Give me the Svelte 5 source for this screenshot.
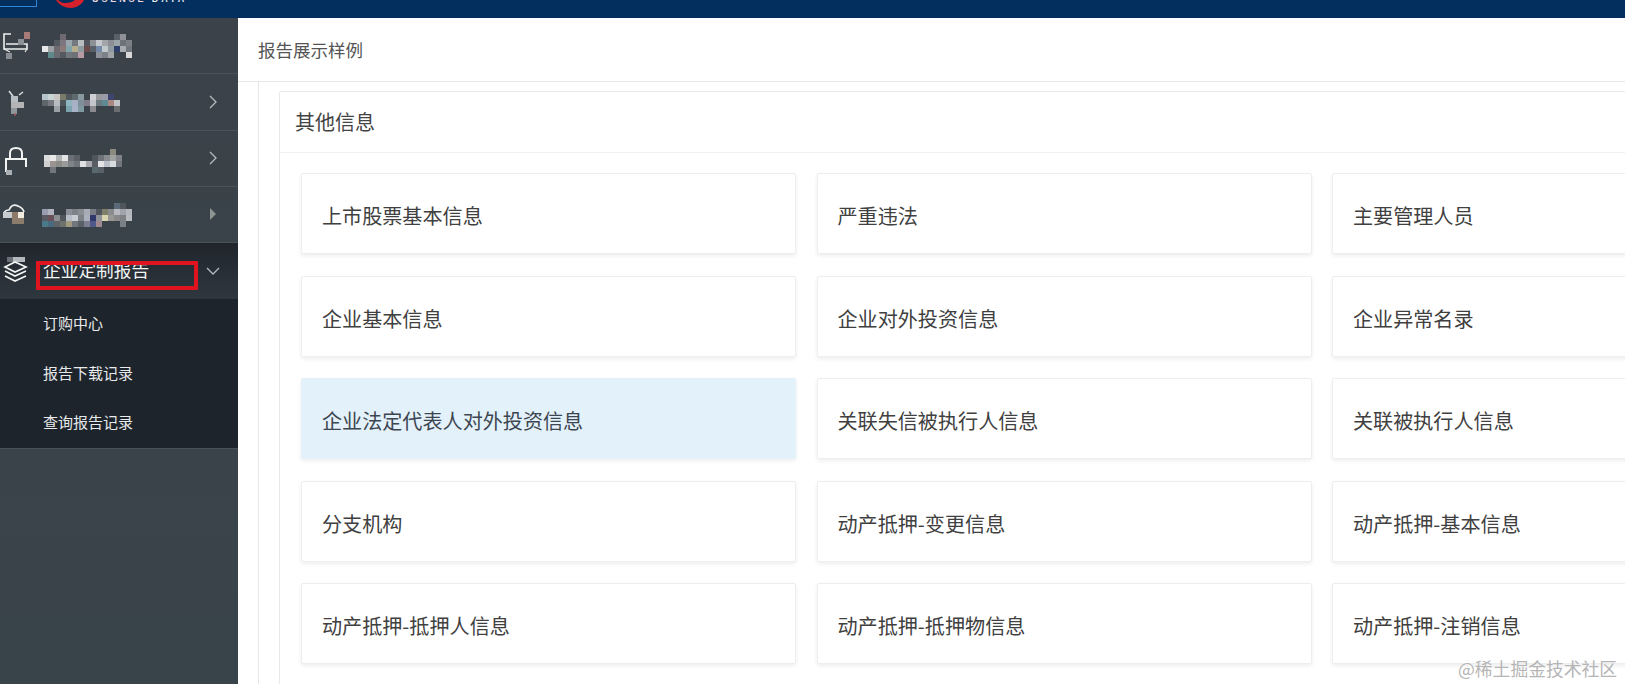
<script lang="ts">
  const tiles = [
    "上市股票基本信息", "严重违法", "主要管理人员",
    "企业基本信息", "企业对外投资信息", "企业异常名录",
    "企业法定代表人对外投资信息", "关联失信被执行人信息", "关联被执行人信息",
    "分支机构", "动产抵押-变更信息", "动产抵押-基本信息",
    "动产抵押-抵押人信息", "动产抵押-抵押物信息", "动产抵押-注销信息",
  ];

  const subItems = ["订购中心", "报告下载记录", "查询报告记录"];

  // blurred menu labels, one row of 6px cells per line ("." = empty)
  const blurred = [
    {
      chevron: "none",
      left: 42,
      drop: 1,
      rows: [
        ". . . #6f6a72 . . . . . . . . #5a6068 #8e9298 .",
        ". . #555a60 #7d7680 #9aa6ad #727a80 #b8bdbf #4f555b #8d9196 #c4c8cc #a2a6ab #8b8e94 #98a4a8 #6d7278 #7c8086",
        "#e8e8e8 #9aa0a4 #6f6a70 #8a7a7a #7fa4aa #b6ad8e #8d9ca0 #6b4a4c #5a6068 #7488a8 #c0c8cc #8f9aa0 #2f3f6c #a8acb0 #70767c",
        ". #5f8a8c #6a6a70 #555a60 #70767c #6d7278 #b89aa4 . . #8d929a #7d8288 #a0a4a8 . . #d8d8d8",
      ],
    },
    {
      chevron: "line",
      left: 42,
      drop: 2,
      rows: [
        "#b4c4c8 #c8d4d4 #c8c4c4 #7a7a6a #50585e #5e6a6e #889aa0 #3d454c #d0d0d4 #9a9a9c #9a9ca8 #3e4470 .",
        "#5e666a #767a80 #b8bcc0 #4e565c #8eb4c0 #a8b0c8 #7e8e9a #807c8a #c4c4cc #6a7a80 #5e8a94 #a88880 #c0c4c8",
        ". . #9aa2a8 . #7ca4b0 #aab2c8 #7e9aa0 . #8a8a90 . . . #6a6e70",
      ],
    },
    {
      chevron: "line",
      left: 44,
      drop: 6,
      rows: [
        ". . . . . . . . . . . #8a8a80 .",
        "#d8dcdc #e8e8e8 #b0b4b4 #e4e4e4 #6a7076 #5a6066 . . #50565c #6d7278 #888c90 #a0a2a0 #80848a",
        "#d0d0d0 #9c9490 #8c8c88 #9a9a9a #7e8488 #6e7478 #e0e0e4 #a8aab0 #585e64 #e4e4e8 #bcc0c8 #d8dce0 #70767c",
        ". #70767c . . . . . . #5a6870 #5a6068 . . .",
      ],
    },
    {
      chevron: "solid",
      left: 42,
      drop: 1,
      rows: [
        ". . . . . . . . . . . . #5a6a78 #50565c .",
        "#9a9cb0 #b0b2c0 . . #8c9098 #7e8288 #8a8e94 #a8acb4 #7a7e84 #50565c #80806a #8a8c90 #b8b8c0 #a0a4a8 #b4b8bc",
        "#5a5a62 #6a5058 #8a8e90 #50565c #b8bcc4 #c8ccd4 #7e8288 #aab0bc #30386c #8e9298 #d8d4b0 #9a9894 #8a8a8c #7e8084 #b8bcc0",
        "#4a7a8a #4a6a80 #606468 #70726e #a09a80 #70767c #5a6068 #7a7e90 #505a88 #a08890 . . . #7a8288 .",
      ],
    },
  ];
</script>

<div class="page">
  <header class="topbar">
    <div class="top-box"></div>
    <svg class="swoosh" width="30" height="8" viewBox="0 0 30 8">
      <path d="M0 0 C3 5 9 8 15 8 C21 8 26 4 28 0 L19 0 C17 2 13 3 9 3 C6 3 4 2 2 0 Z" fill="#d6202c" />
    </svg>
    <div class="brand"><span class="brand-a">USENSE</span> DATA</div>
  </header>

  <div class="body">
    <aside class="sidebar">
      {#each blurred as item, i}
        <div class="menu-row">
          <span class="menu-icon">
            {#if i === 0}
              <svg width="30" height="30" viewBox="0 0 30 30">
                <path d="M11 3 H4 V18 H27 V13 H6" fill="none" stroke="#eef0f0" stroke-width="1.6" />
                <rect x="24" y="1" width="6" height="7" fill="#a87a78" />
                <rect x="18" y="8" width="6" height="6" fill="#8a9298" />
                <rect x="6" y="22" width="6" height="6" fill="#8a8e94" />
                <path d="M4 18 L10 21 M27 18 L25 21" stroke="#e8e8e8" stroke-width="1.2" />
              </svg>
            {:else if i === 1}
              <svg width="30" height="30" viewBox="0 0 30 30">
                <path d="M9 4 L15 12 M23 5 L19 8" stroke="#dde0e2" stroke-width="1.5" />
                <rect x="11" y="9" width="7" height="6" fill="#b6bec2" />
                <rect x="11" y="15" width="13" height="6" fill="#b4b4b4" />
                <rect x="11" y="21" width="6" height="6" fill="#8e969a" />
                <path d="M15 26 V29" stroke="#c05a66" stroke-width="1.2" />
              </svg>
            {:else if i === 2}
              <svg class="lock" width="30" height="30" viewBox="0 0 30 30">
                <path d="M6 27 V14 H26 V22 M10 14 V8 Q10 3 16 3 Q22 3 22 8 V14" fill="none" stroke="#f2f4f4" stroke-width="2" />
                <rect x="6" y="25" width="6" height="5" fill="#aab0b4" />
              </svg>
            {:else}
              <svg width="30" height="30" viewBox="0 0 30 30">
                <path d="M4 18 Q3 11 9 11 Q12 4 18 7 Q23 9 24 13" fill="none" stroke="#f0f2f2" stroke-width="1.7" />
                <rect x="3" y="13" width="9" height="6" fill="#c8ccce" />
                <rect x="12" y="13" width="6" height="6" fill="#8e7a68" />
                <rect x="18" y="13" width="6" height="6" fill="#f0ece0" />
                <rect x="12" y="19" width="12" height="6" fill="#8c7c6c" />
              </svg>
            {/if}
          </span>
          <div class="mosaic" style="margin-left: {item.left - 38}px; margin-top: {item.drop}px">
            {#each item.rows as row}
              <div class="mosaic-row">
                {#each row.split(" ") as cell}
                  <span class="cell" style={cell === "." ? "" : `background: ${cell}`}></span>
                {/each}
              </div>
            {/each}
          </div>
          {#if item.chevron === "line"}
            <svg class="chevron" width="10" height="14" viewBox="0 0 10 14">
              <path d="M2 1 L8 7 L2 13" fill="none" stroke="#b4bbc0" stroke-width="1.3" />
            </svg>
          {:else if item.chevron === "solid"}
            <svg class="chevron" width="10" height="14" viewBox="0 0 10 14">
              <path d="M2 1 L8 7 L2 13 Z" fill="#8e9490" />
            </svg>
          {/if}
        </div>
      {/each}

      <div class="menu-row active">
        <span class="menu-icon">
          <svg width="30" height="30" viewBox="0 0 30 30">
            <rect x="7" y="1" width="6" height="5" fill="#6a7076" />
            <rect x="13" y="1" width="12" height="5" fill="#b4b8bc" />
            <path d="M5 11 L15 6 L26 11 L15 16 Z M5 15 L15 20 L26 15 M5 20 L15 25 L26 20" fill="none" stroke="#f2f4f4" stroke-width="1.7" />
          </svg>
        </span>
        <span class="menu-label">企业定制报告</span>
        <svg class="chevron down" width="14" height="10" viewBox="0 0 14 10">
          <path d="M1 2 L7 8 L13 2" fill="none" stroke="#b4bbc0" stroke-width="1.3" />
        </svg>
        <div class="annotation"></div>
      </div>

      <ul class="submenu">
        {#each subItems as sub}
          <li>{sub}</li>
        {/each}
      </ul>
    </aside>

    <main class="content">
      <div class="crumb">报告展示样例</div>
      <div class="scroll">
        <section class="card">
          <div class="card-title">其他信息</div>
          <div class="grid">
            {#each tiles as tile, i}
              <div class="tile" class:hover={i === 6}>{tile}</div>
            {/each}
          </div>
        </section>
      </div>
    </main>
  </div>

  <div class="watermark">@稀土掘金技术社区</div>
</div>

<style>
  :global(body) {
    margin: 0;
    background: #fff;
  }

  .page {
    position: relative;
    width: 1625px;
    height: 684px;
    overflow: hidden;
    display: flex;
    flex-direction: column;
    font-family: "Noto Sans CJK SC", "Noto Sans", sans-serif;
  }

  .topbar {
    flex: 0 0 18px;
    height: 18px;
    background: #022f5e;
    display: flex;
    align-items: flex-start;
    overflow: hidden;
  }

  .top-box {
    width: 36px;
    height: 6px;
    border: 1px solid #2f86d6;
    border-top: none;
    border-left: none;
    flex: none;
  }

  .swoosh {
    margin-left: 19px;
    flex: none;
  }

  .brand {
    margin-left: 6px;
    margin-top: -7px;
    font-family: "Liberation Sans", sans-serif;
    font-size: 9px;
    line-height: 13px;
    font-weight: 700;
    letter-spacing: 2.9px;
    color: #e6ecf2;
    white-space: nowrap;
  }

  .brand-a {
    color: #ecd8dc;
  }

  .body {
    flex: 1;
    display: flex;
    min-height: 0;
  }

  .sidebar {
    width: 238px;
    flex: none;
    background: linear-gradient(#3b4249, #39444a);
  }

  .menu-row {
    position: relative;
    height: 56.25px;
    box-sizing: border-box;
    display: flex;
    align-items: center;
    border-bottom: 1px solid #4a5259;
  }

  .menu-icon {
    width: 30px;
    height: 30px;
    flex: none;
    margin-right: 8px;
  }

  .menu-icon svg {
    display: block;
  }

  .menu-icon .lock {
    transform: translateY(2px);
  }

  .mosaic {
    filter: blur(0.5px);
  }

  .mosaic-row {
    display: flex;
    height: 6px;
  }

  .cell {
    width: 6px;
    height: 6px;
    flex: none;
  }

  .chevron {
    position: absolute;
    right: 20px;
    top: 50%;
    transform: translateY(-50%);
  }

  .chevron.down {
    right: 18px;
  }

  .active {
    height: 56px;
    background: linear-gradient(#20252c, #2f373e);
    border-bottom: none;
  }

  .menu-label {
    font-size: 17.7px;
    color: #f2f4f4;
    margin-left: 5px;
    line-height: 1;
    transform: translateY(-1px);
  }

  .annotation {
    position: absolute;
    left: 36px;
    top: 18px;
    width: 162px;
    height: 29px;
    box-sizing: border-box;
    border: 4px solid #e0141e;
    border-radius: 1px;
  }

  .submenu {
    list-style: none;
    margin: 0;
    padding: 0;
    background: #1e242b;
    border-bottom: 1px solid #495158;
  }

  .submenu li {
    height: 49.7px;
    line-height: 48px;
    padding-left: 43px;
    font-size: 15px;
    color: #e8eaec;
  }

  .content {
    flex: 1;
    min-width: 0;
    display: flex;
    flex-direction: column;
  }

  .crumb {
    height: 63px;
    line-height: 63px;
    padding-left: 20px;
    font-size: 17.5px;
    color: #555;
    background: #fff;
    border-bottom: 1px solid #e4e6e8;
  }

  .scroll {
    flex: 1;
    min-height: 0;
    margin-left: 20px;
    padding: 9px 0 0 20px;
    border-left: 1px solid #e4e6e8;
  }

  .card {
    width: 1600px;
    box-sizing: border-box;
    border: 1px solid #e7e9eb;
    border-radius: 2px;
    background: #fff;
  }

  .card-title {
    height: 60px;
    line-height: 60px;
    padding-left: 15px;
    font-size: 20px;
    color: #444;
    border-bottom: 1px solid #eef0f2;
  }

  .grid {
    display: grid;
    grid-template-columns: repeat(3, 495px);
    grid-auto-rows: 81px;
    column-gap: 20.5px;
    row-gap: 21.6px;
    padding: 20px 0 40px 21px;
  }

  .tile {
    box-sizing: border-box;
    border: 1px solid #eceef0;
    border-radius: 2px;
    box-shadow: 0 2px 4px rgba(0, 0, 0, 0.07);
    background: #fff;
    padding-left: 20px;
    line-height: 83px;
    font-size: 20.1px;
    color: #404040;
    white-space: nowrap;
  }

  .tile.hover {
    background: #e3f1fb;
    border-color: #e3f1fb;
    color: #3d4650;
  }

  .watermark {
    position: absolute;
    left: 1458px;
    top: 656px;
    font-size: 17.8px;
    line-height: 24px;
    color: #b5b5b5;
    white-space: nowrap;
  }
</style>
